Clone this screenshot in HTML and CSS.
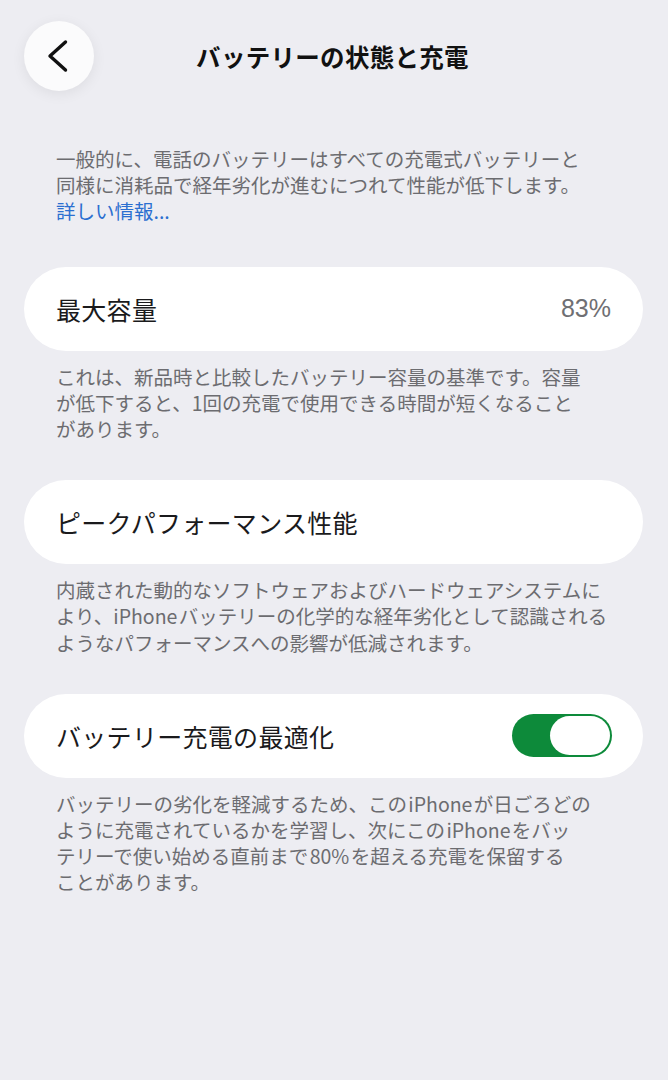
FILE: index.html
```html
<!DOCTYPE html>
<html lang="ja">
<head>
<meta charset="utf-8">
<link rel="stylesheet" href="styles.css">
</head>
<body>
<div class="page">
  <header class="nav">
    <div class="back">
      <svg width="70" height="70" viewBox="0 0 70 70"><path d="M41.5 21 L26 35 L41.5 49" fill="none" stroke="#111" stroke-width="3.4" stroke-linecap="round" stroke-linejoin="round"/></svg>
    </div>
    <h1 class="title">バッテリーの状態と充電</h1>
  </header>

  <p class="note intro">一般的に、電話のバッテリーはすべての充電式バッテリーと<br>同様に消耗品で経年劣化が進むにつれて性能が低下します。<br><span class="link">詳しい情報...</span></p>

  <div class="card">
    <span class="label">最大容量</span>
    <span class="value">83%</span>
  </div>
  <p class="note">これは、新品時と比較したバッテリー容量の基準です。容量<br>が低下すると、1回の充電で使用できる時間が短くなること<br>があります。</p>

  <div class="card">
    <span class="label">ピークパフォーマンス性能</span>
  </div>
  <p class="note">内蔵された動的なソフトウェアおよびハードウェアシステムに<br>より、iPhone バッテリーの化学的な経年劣化として認識される<br>ようなパフォーマンスへの影響が低減されます。</p>

  <div class="card">
    <span class="label">バッテリー充電の最適化</span>
    <div class="toggle"><div class="knob"></div></div>
  </div>
  <p class="note">バッテリーの劣化を軽減するため、この iPhone が日ごろどの<br>ように充電されているかを学習し、次にこの iPhone をバッ<br>テリーで使い始める直前まで 80% を超える充電を保留する<br>ことがあります。</p>
</div>
</body>
</html>
```

FILE: styles.css
```css
html, body {
  margin: 0;
  padding: 0;
  background: #ededf2;
}
body {
  font-family: "Noto Sans CJK JP", "Noto Sans", sans-serif;
  width: 668px;
  height: 1080px;
  overflow: hidden;
}
.page {
  padding: 21px 25px 0 24px;
}
.nav {
  display: flex;
  align-items: center;
  height: 70px;
}
.back {
  width: 70px;
  height: 70px;
  border-radius: 50%;
  background: #fbfbfc;
  box-shadow: 0 3px 14px rgba(0, 0, 0, 0.07);
  flex: none;
}
.back svg { display: block; }
.title {
  flex: 1;
  margin: 0 70px 0 0;
  text-align: center;
  font-size: 24.5px;
  font-weight: 700;
  color: #111;
  letter-spacing: 0.3px;
  transform: translateX(-1px);
}
.note {
  margin: 13px 0 0 0;
  padding-left: 32px;
  font-size: 19.5px;
  line-height: 26.2px;
  color: #6c6c70;
  white-space: nowrap;
  word-spacing: -3px;
}
.intro {
  margin-top: 55px;
}
.link {
  color: #2b6fd0;
}
.card {
  background: #fff;
  border-radius: 42px;
  height: 84px;
  display: flex;
  align-items: center;
  justify-content: space-between;
  padding: 0 32px 0 32px;
  box-sizing: border-box;
  margin-top: 38px;
}
.intro + .card { margin-top: 42px; }
.label {
  font-size: 25px;
  color: #1a1a1c;
  letter-spacing: 0.3px;
}
.value {
  font-size: 25px;
  color: #6f6f73;
  font-family: "Liberation Sans", "Noto Sans", sans-serif;
}
.toggle {
  width: 100px;
  height: 43px;
  border-radius: 22px;
  background: #0d8a3a;
  display: flex;
  justify-content: flex-end;
  align-items: center;
  padding: 2px;
  box-sizing: border-box;
  margin-right: -1px;
}
.knob {
  width: 60px;
  height: 39px;
  border-radius: 20px;
  background: #fff;
}
```
